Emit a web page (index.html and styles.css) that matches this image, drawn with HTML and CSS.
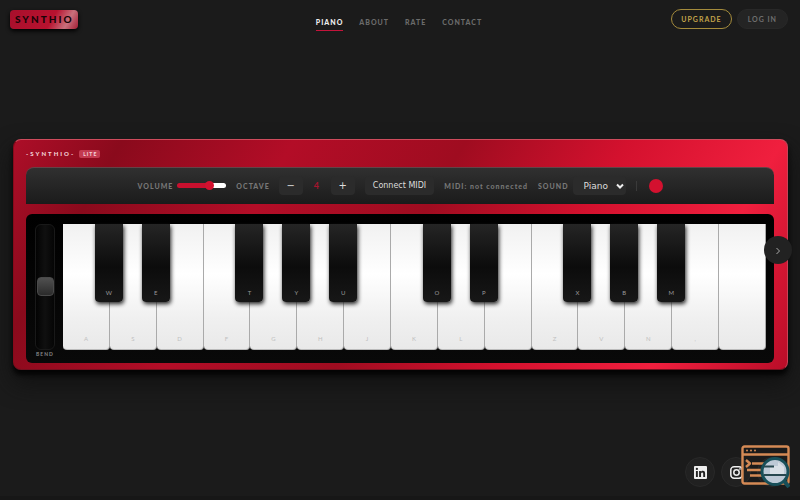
FILE: index.html
```html
<!DOCTYPE html>
<html lang="en">
<head>
    <meta charset="UTF-8">
    <meta name="viewport" content="width=device-width, initial-scale=1.0">
    <title>Synthio</title>
    <link rel="stylesheet" href="styles.css">
</head>
<body>
    <header class="header">
        <div class="header-side"><a href="#" class="logo">SYNTHIO</a></div>
        <nav class="nav">
            <a href="#piano" class="active">PIANO</a>
            <a href="#about">ABOUT</a>
            <a href="#rate">RATE</a>
            <a href="#contact">CONTACT</a>
        </nav>
        <div class="header-side account">
            <button class="pill upgrade">UPGRADE</button>
            <button class="pill">LOG IN</button>
        </div>
    </header>

    <main class="main">
        <section class="piano" id="piano">
            <div class="brand">-SYNTHIO- <span class="badge">LITE</span></div>

            <div class="controls">
                <label class="control" for="volume">VOLUME
                    <input type="range" id="volume" class="volume" min="0" max="100" value="70">
                </label>
                <div class="control octave">
                    <span>OCTAVE</span>
                    <button class="btn step" aria-label="Octave down">−</button>
                    <span class="octave-value">4</span>
                    <button class="btn step" aria-label="Octave up">+</button>
                </div>
                <button class="btn midi">Connect MIDI</button>
                <span class="midi-status">MIDI: not connected</span>
                <label class="control sound" for="sound">SOUND
                    <span class="select-wrap">
                        <select id="sound" class="btn">
                            <option>Piano</option>
                            <option>Organ</option>
                            <option>Synth</option>
                        </select>
                        <svg class="caret" viewBox="0 0 8 6"><path d="M1 1.5 4 4.5 7 1.5"/></svg>
                    </span>
                </label>
                <span class="divider"></span>
                <button class="record" aria-label="Record"></button>
            </div>

            <div class="keybed">
                <div class="bend">
                    <div class="bend-track"><div class="bend-thumb"></div></div>
                    <span class="bend-label">BEND</span>
                </div>
                <div class="keys">
                    <div class="slot"><button class="white">A</button><button class="black">W</button></div>
                    <div class="slot"><button class="white">S</button><button class="black">E</button></div>
                    <div class="slot"><button class="white">D</button></div>
                    <div class="slot"><button class="white">F</button><button class="black">T</button></div>
                    <div class="slot"><button class="white">G</button><button class="black">Y</button></div>
                    <div class="slot"><button class="white">H</button><button class="black">U</button></div>
                    <div class="slot"><button class="white">J</button></div>
                    <div class="slot"><button class="white">K</button><button class="black">O</button></div>
                    <div class="slot"><button class="white">L</button><button class="black">P</button></div>
                    <div class="slot"><button class="white"></button></div>
                    <div class="slot"><button class="white">Z</button><button class="black">X</button></div>
                    <div class="slot"><button class="white">V</button><button class="black">B</button></div>
                    <div class="slot"><button class="white">N</button><button class="black">M</button></div>
                    <div class="slot"><button class="white">,</button></div>
                    <div class="slot"><button class="white"></button></div>
                </div>
            </div>
        </section>
    </main>

    <button class="next" aria-label="Next">
        <svg viewBox="0 0 10 10"><path d="M3.5 2 6.5 5 3.5 8"/></svg>
    </button>

    <footer class="socials">
        <a href="#" aria-label="LinkedIn">
            <svg viewBox="0 0 24 24"><path fill-rule="evenodd" d="M22.200 0H1.800A1.800 1.800 0 0 0 0 1.800v20.400A1.800 1.800 0 0 0 1.800 24h20.400a1.800 1.800 0 0 0 1.800-1.800V1.800A1.800 1.800 0 0 0 22.200 0zM7.1 20.4H3.6V9h3.5zM5.3 7.5a2.1 2.1 0 1 1 0-4.2 2.1 2.1 0 0 1 0 4.2zM20.5 20.4H17v-5.6c0-1.3 0-3-1.9-3s-2.1 1.4-2.1 2.9v5.7H9.4V9h3.4v1.6c.5-.9 1.6-1.9 3.4-1.9 3.6 0 4.3 2.4 4.3 5.5z"/></svg>
        </a>
        <a href="#" aria-label="Instagram">
            <svg viewBox="0 0 24 24" class="outline"><rect x="1.5" y="1.5" width="21" height="21" rx="6"/><circle cx="12" cy="12" r="5"/><circle cx="18.4" cy="5.6" r="0.4"/></svg>
        </a>
        <a href="#" aria-label="YouTube">
            <svg viewBox="0 0 24 24"><path fill-rule="evenodd" d="M3 4h18a3 3 0 0 1 3 3v10a3 3 0 0 1-3 3H3a3 3 0 0 1-3-3V7a3 3 0 0 1 3-3zm6.5 4v8l7-4z"/></svg>
        </a>
    </footer>

    <svg class="inspector" viewBox="0 0 50 44">
        <g fill="none" stroke="#d58a55" stroke-width="2.4" stroke-linejoin="round">
            <rect x="2.500" y="2.500" width="46" height="37" rx="2"/>
            <path d="M2.500 10.500h46M6 16l4 3.500-4 3.500M12 19.500h12M7 26h16M10 31.500h13"/>
        </g>
        <g fill="#d58a55">
            <circle cx="7" cy="6.500" r="1"/><circle cx="11" cy="6.500" r="1"/><circle cx="15" cy="6.500" r="1"/>
        </g>
        <path d="M44 37 49 43" stroke="#174f59" stroke-width="4"/>
        <circle cx="35" cy="27.500" r="13" fill="#bdc9d6" stroke="#174f59" stroke-width="3"/>
        <path d="M30 22h8v-4l6 5v7H30z" fill="#d8dfe6"/>
        <path d="M24 22.500h10M24 31h22" stroke="#27474f" stroke-width="2"/>
    </svg>
</body>
</html>
```

FILE: styles.css
```css
* {
    box-sizing: border-box;
}
body {
    margin: 0;
    min-height: 100vh;
    display: flex;
    flex-direction: column;
    background: #1b1b1b;
    color: #777;
    font-family: Lato, "Open Sans", sans-serif;
    border-bottom: 4px solid #171717;
}
button, select, input {
    font-family: inherit;
    margin: 0;
}
button, select {
    cursor: pointer;
}
a {
    text-decoration: none;
}
.header {
    display: flex;
    align-items: center;
    height: 38px;
    padding: 0 12px 0 10px;
}
.header-side {
    flex: 1;
    display: flex;
}
.logo {
    padding: 0 4px 0 5px;
    line-height: 19px;
    border-radius: 4px;
    background: linear-gradient(120deg, #a80f2c, #b8122f 60%, #c8707c 82%, #a31c34);
    box-shadow: 0 2px 4px #000;
    color: #170307;
    font-size: 10px;
    font-weight: 900;
    letter-spacing: 2px;
}
.nav {
    display: flex;
    gap: 16px;
    padding-top: 6px;
}
.nav a {
    color: #6b6b6b;
    font-size: 7px;
    font-weight: 900;
    letter-spacing: 1px;
    line-height: 16px;
    border-bottom: 1px solid transparent;
}
.nav a.active {
    color: #eee;
    border-color: #c4143b;
}
.account {
    justify-content: flex-end;
    gap: 5px;
}
.pill {
    height: 20px;
    padding: 0 10px;
    border: 1px solid #282828;
    border-radius: 10px;
    background: #242424;
    color: #6f6f6f;
    font-size: 7px;
    font-weight: 700;
    letter-spacing: 1px;
}
.upgrade {
    padding: 0 9px;
    background: #1b1b1b;
    border-color: #a48b3c;
    color: #c1a34a;
}
.main {
    flex: 1;
    display: flex;
    align-items: center;
    padding: 0 12px 26px 13px;
}
.piano {
    flex: 1;
    padding: 7px 13px 6px 12px;
    border: 1px solid;
    border-color: #cf4b5c #c94257 #76101f #870a1b;
    border-radius: 8px;
    background: linear-gradient(120deg, #ad0e28 0%, #8a0a1c 12%, #b30d27 31%, #9f0c20 50%, #d4112e 68%, #f01f3e 85%, #b90d28 100%);
    box-shadow: 0 5px 4px #050505, 0 12px 24px #101010;
}
.brand {
    display: flex;
    align-items: center;
    gap: 4px;
    height: 14px;
    margin-bottom: 6px;
    color: #f3d3d8;
    font-size: 6px;
    font-weight: 900;
    letter-spacing: 2px;
}
.badge {
    padding: 0 3px 0 4px;
    line-height: 8px;
    border-radius: 2px;
    background: #c33a50;
    font-size: 5px;
    letter-spacing: 1px;
}
.controls {
    display: flex;
    align-items: center;
    justify-content: center;
    gap: 10px;
    height: 37px;
    border-top: 1px solid #634347;
    border-radius: 8px 8px 0 0;
    background: linear-gradient(#303030, #1b1b1b);
    font-size: 7px;
    font-weight: 900;
    letter-spacing: 1px;
}
.control {
    display: flex;
    align-items: center;
    gap: 4px;
}
.octave {
    gap: 9px;
}
.volume {
    appearance: none;
    width: 49px;
    height: 5px;
    border-radius: 3px;
    background: linear-gradient(90deg, #c8102e 68%, #fff 68%);
}
.volume::-webkit-slider-thumb {
    appearance: none;
    width: 9px;
    height: 9px;
    border-radius: 50%;
    background: #d3112f;
}
.btn {
    height: 19px;
    border: 0;
    border-radius: 4px;
    background: #2b2b2b;
    color: #ddd;
    font-family: "DejaVu Sans", sans-serif;
    font-size: 8px;
}
.step {
    width: 24px;
    padding: 0;
    font-size: 10px;
}
.octave-value {
    width: 10px;
    color: #a5152e;
    text-align: center;
    font-size: 9px;
    font-weight: 700;
}
.midi {
    padding: 0 8px;
}
.select-wrap {
    position: relative;
    display: flex;
}
.select-wrap select {
    appearance: none;
    width: 53px;
    padding: 0 14px 0 11px;
    font-size: 9px;
}
.caret {
    position: absolute;
    right: 2px;
    top: 7px;
    width: 8px;
    height: 6px;
    fill: none;
    stroke: #eee;
    stroke-width: 2;
    pointer-events: none;
}
.divider {
    width: 1px;
    height: 10px;
    background: #3a3a3a;
}
.record {
    width: 14px;
    height: 14px;
    margin-left: 2px;
    padding: 0;
    border: 0;
    border-radius: 50%;
    background: #d3112f;
}
.keybed {
    display: flex;
    gap: 8px;
    margin-top: 10px;
    padding: 10px 8px 5px 9px;
    border-radius: 6px;
    background: linear-gradient(#000, #090909);
}
.bend {
    display: flex;
    flex-direction: column;
    align-items: center;
    width: 20px;
}
.bend-track {
    display: flex;
    align-items: center;
    justify-content: center;
    width: 20px;
    height: 126px;
    border: 1px solid #191919;
    border-radius: 6px;
    background: linear-gradient(90deg, #030303, #101010, #050505);
}
.bend-thumb {
    width: 17px;
    height: 19px;
    border: 1px solid #4a4a4a;
    border-radius: 4px;
    background: linear-gradient(#505050, #2b2b2b);
}
.bend-label {
    color: #888;
    font-size: 5px;
    font-weight: 700;
    line-height: 8px;
    letter-spacing: 1px;
}
.keys {
    flex: 1;
    display: flex;
    height: 126px;
}
.slot {
    flex: 1;
    position: relative;
    display: flex;
}
.white, .black {
    display: flex;
    align-items: flex-end;
    justify-content: center;
    border: 0;
    font-size: 6px;
}
.white {
    flex: 1;
    padding: 0 0 7px;
    border-right: 1px solid #aaa;
    border-bottom: 1px solid #bbb;
    border-radius: 0 0 4px 4px;
    background: linear-gradient(#f1f1f1, #fff 40%, #f0f0f0 75%, #e9e9e9);
    color: #c0c0c0;
}
.black {
    position: absolute;
    z-index: 1;
    top: 0;
    right: -13px;
    width: 28px;
    height: 78px;
    padding: 0 0 6px;
    border-radius: 0 0 4px 4px;
    background: linear-gradient(#252525, #0c0c0c 55%, #171717);
    box-shadow: 1px 2px 4px #222;
    color: #999;
}
.next {
    position: fixed;
    top: 50%;
    right: 8px;
    width: 28px;
    height: 28px;
    margin-top: -14px;
    padding: 9px;
    border: 0;
    border-radius: 50%;
    background: #222;
}
.next svg {
    display: block;
    width: 10px;
    height: 10px;
    margin-top: 1px;
    fill: none;
    stroke: #aaa;
}
.socials {
    position: fixed;
    right: 13px;
    bottom: 13px;
    display: flex;
    gap: 6px;
}
.socials a {
    display: flex;
    align-items: center;
    justify-content: center;
    width: 30px;
    height: 30px;
    border: 1px solid #292929;
    border-radius: 50%;
    background: #212121;
}
.socials svg {
    width: 13px;
    height: 13px;
    fill: #eee;
}
.socials .outline {
    fill: none;
    stroke: #eee;
    stroke-width: 2.8;
}
.inspector {
    position: fixed;
    right: 10px;
    bottom: 12px;
    width: 50px;
    height: 44px;
}
```
